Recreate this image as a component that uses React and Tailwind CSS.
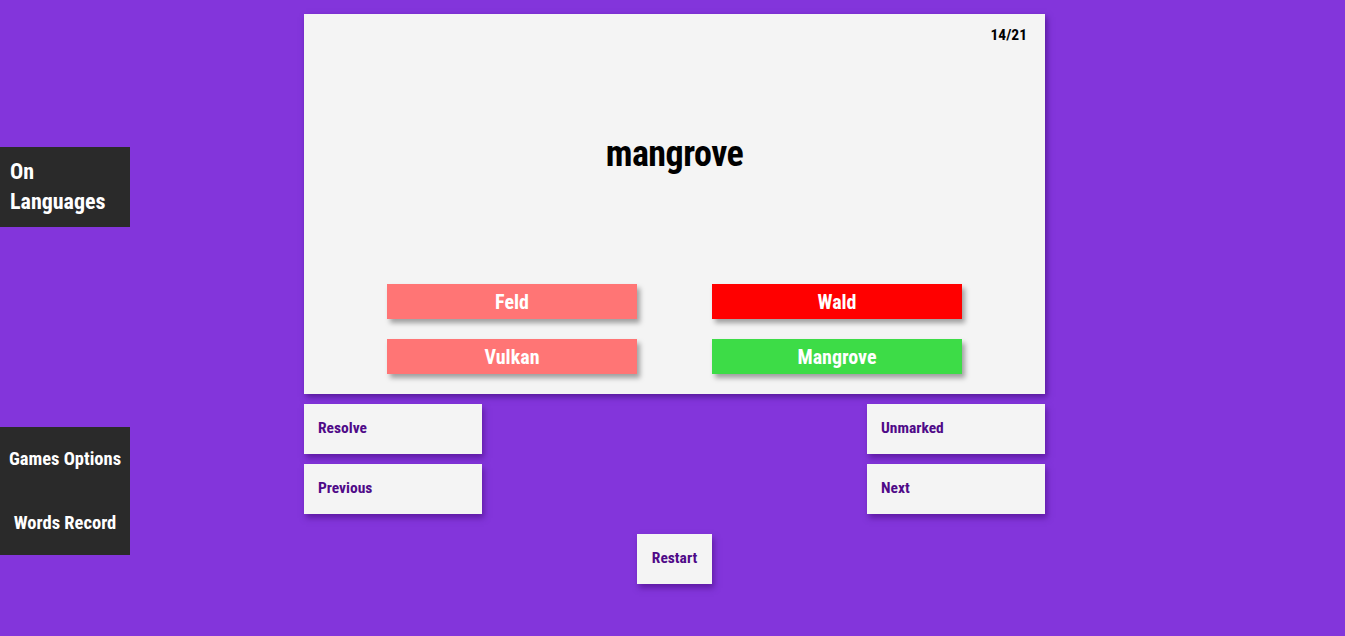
import React from "react";

function Choice({ label, color }) {
  return (
    <div className={`h-[35px] w-[250px] flex items-center justify-center text-white text-[20px] font-bold shadow-[3px_4px_5px_rgba(0,0,0,0.35)] ${color}`}>
      {label}
    </div>
  );
}

function NavBtn({ label, w = "w-[178px]", center = false }) {
  return (
    <div className={`h-[50px] ${w} bg-[#f4f4f4] flex items-center ${center ? "justify-center" : "pl-[14px]"} text-[#4f0a88] text-[15.5px] font-bold shadow-[2px_4px_6px_rgba(60,0,110,0.5)]`}>
      {label}
    </div>
  );
}

export default function App() {
  return (
    <div className="w-full h-[636px] bg-[#8335db] flex overflow-hidden font-['Roboto',sans-serif] font-stretch-[75%]">
      <div className="w-[130px] flex flex-col shrink-0">
        <div className="mt-[147px] h-[80px] bg-[#2a2a2a] text-white text-[22px] font-bold leading-[30px] pl-[10px] flex flex-col justify-center">
          <span>On</span>
          <span>Languages</span>
        </div>
        <div className="mt-[200px] h-[128px] bg-[#2a2a2a] text-white text-[18.5px] font-bold flex flex-col items-center justify-center gap-[40px]">
          <span className="leading-[24px]">Games Options</span>
          <span className="leading-[24px]">Words Record</span>
        </div>
      </div>
      <div className="ml-[174px] w-[741px] flex flex-col pt-[14px]">
        <div className="h-[380px] bg-[#f4f4f4] shadow-[2px_3px_6px_rgba(50,0,100,0.55)] flex flex-col">
          <div className="flex justify-end pr-[18px] pt-[10px] text-[15.5px] font-bold text-black h-[40px]">14/21</div>
          <div className="flex justify-center mt-[75px] text-[36px] tracking-[-0.5px] font-bold text-black leading-[50px]">mangrove</div>
          <div className="mt-[105px] grid grid-cols-[250px_250px] gap-x-[75px] gap-y-[20px] justify-center">
            <Choice label="Feld" color="bg-[#ff7575]" />
            <Choice label="Wald" color="bg-[#ff0000]" />
            <Choice label="Vulkan" color="bg-[#ff7575]" />
            <Choice label="Mangrove" color="bg-[#3ddc47]" />
          </div>
        </div>
        <div className="mt-[10px] flex justify-between">
          <div className="flex flex-col gap-[10px]">
            <NavBtn label="Resolve" />
            <NavBtn label="Previous" />
          </div>
          <div className="flex flex-col gap-[10px]">
            <NavBtn label="Unmarked" />
            <NavBtn label="Next" />
          </div>
        </div>
        <div className="mt-[20px] flex justify-center">
          <NavBtn label="Restart" w="w-[75px]" center />
        </div>
      </div>
    </div>
  );
}
